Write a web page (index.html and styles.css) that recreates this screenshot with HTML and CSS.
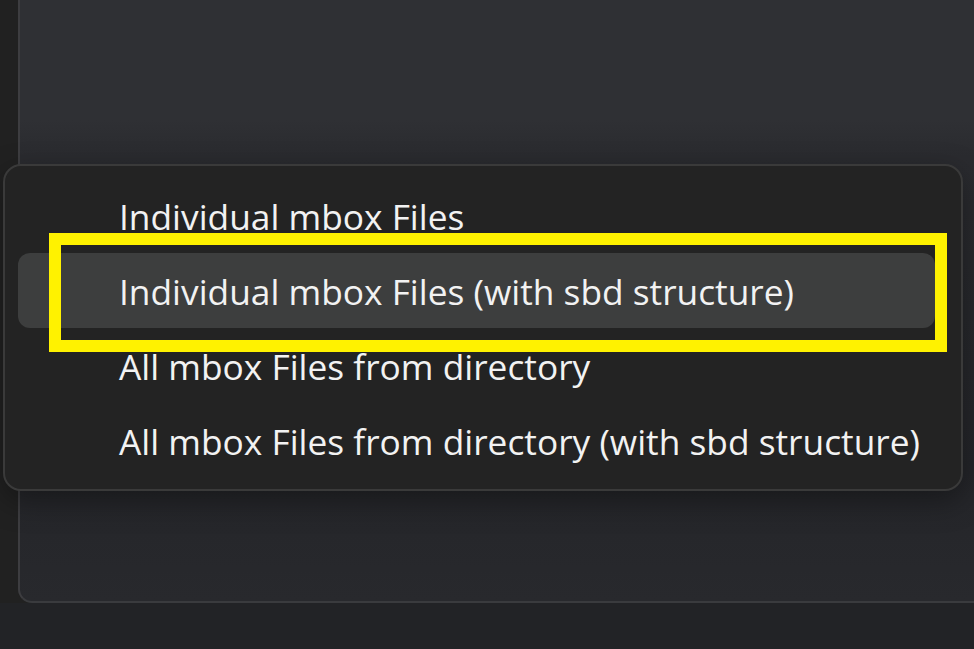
FILE: index.html
```html
<!DOCTYPE html>
<html lang="en">
<head>
    <meta charset="UTF-8">
    <meta name="viewport" content="width=device-width, initial-scale=1.0">
    <title>Import mbox</title>
    <link rel="stylesheet" href="styles.css">
</head>
<body>

<div class="page">
    <div class="panel">
        <p class="panel-text"><span class="left">button. Selection will allow us to file</span><span>actualised a</span></p>
    </div>
    <div class="below"></div>
</div>

<div class="menu" id="importMenu">
    <div class="menu-item">Individual mbox Files</div>
    <div class="menu-item active">Individual mbox Files (with sbd structure)</div>
    <div class="menu-item">All mbox Files from directory</div>
    <div class="menu-item">All mbox Files from directory (with sbd structure)</div>
</div>

<div class="highlight-box"></div>

</body>
</html>
```

FILE: styles.css
```css
html, body {
    margin: 0;
    padding: 0;
}
body {
    width: 974px;
    height: 649px;
    overflow: hidden;
    background-color: #212121;
    font-family: "Open Sans", "Noto Sans", sans-serif;
    position: relative;
}
.page {
    height: 649px;
    display: flex;
    flex-direction: column;
}
.panel {
    margin-left: 18px;
    height: 601px;
    border-left: 2px solid #3d3d40;
    border-bottom: 2px solid #3a3b3e;
    border-bottom-left-radius: 14px;
    background: linear-gradient(180deg, #2f3034 0%, #2f3034 20%, #2a2b2f 26%, #242529 78%, #28292d 100%);
    overflow: hidden;
}
.panel-text {
    margin: -41px 0 0 0;
    font-size: 38px;
    line-height: 46px;
    color: #e6e6e6;
    white-space: nowrap;
    display: flex;
}
.panel-text .left {
    width: 756px;
    flex-shrink: 0;
}
.below {
    flex: 1;
    background-color: #222326;
}

.menu {
    position: absolute;
    left: 3px;
    top: 164px;
    width: 960px;
    height: 327px;
    box-sizing: border-box;
    padding: 12px 0;
    background-color: #232323;
    border: 2px solid #3a3a3a;
    border-radius: 18px;
    box-shadow: 0 10px 30px rgba(0, 0, 0, 0.35);
}
.menu-item {
    height: 75px;
    margin: 0 26px 0 13px;
    padding-left: 101px;
    display: flex;
    align-items: center;
    border-radius: 12px;
    font-size: 35.3px;
    color: #f2f2f2;
    white-space: nowrap;
}
.menu-item.active {
    background-color: #3d3e3e;
}

.highlight-box {
    position: absolute;
    left: 49px;
    top: 233px;
    width: 898px;
    height: 119px;
    box-sizing: border-box;
    border: 12px solid #fff200;
}
```
